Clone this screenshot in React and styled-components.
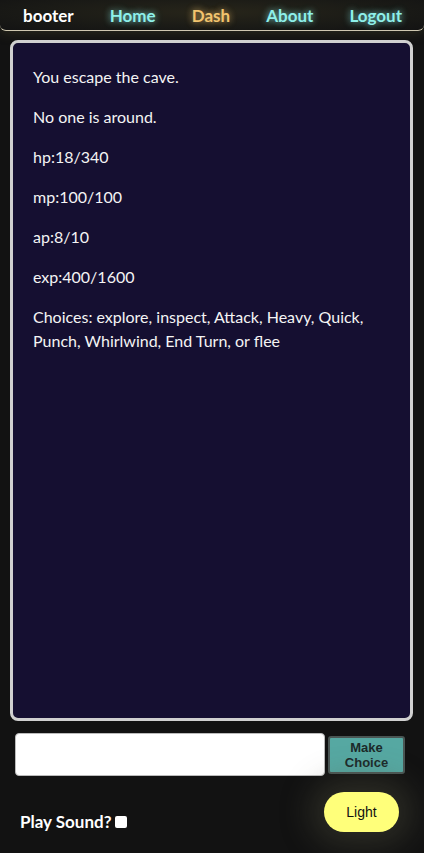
import React from "react"
import styled, { createGlobalStyle } from "styled-components"

const Global = createGlobalStyle`
  html, body {
    margin: 0;
    padding: 0;
    background-color: #121212;
    height: 100%;
  }
  #root {
    min-height: 100%;
  }
`

const Page = styled.div`
  min-height: 853px;
  display: flex;
  flex-direction: column;
  background-color: #121212;
  font-family: Lato, "Open Sans", sans-serif;
  overflow: hidden;
`

const Nav = styled.nav`
  height: 31px;
  display: flex;
  align-items: center;
  justify-content: space-between;
  padding: 0 22px 0 23px;
  border-bottom: 1px solid #cfc8b0;
  border-radius: 0 0 6px 6px;
  box-sizing: border-box;
  background: radial-gradient(ellipse at 50% 40%, #27251a 0%, #1a1a16 60%, #131313 100%);
  box-shadow: 0 2px 12px rgba(90, 85, 50, 0.35);
`

const NavLink = styled.span`
  font-weight: 700;
  font-size: 17px;
  color: ${p => p.color};
  text-shadow: ${p => p.glow ? `0 0 6px ${p.color}99, 0 0 10px ${p.color}55` : "none"};
`

const Screen = styled.div`
  margin: 9px 11px 0 10px;
  height: 681px;
  box-sizing: border-box;
  border: 3px solid #d0d0d0;
  border-radius: 8px;
  background-color: #150f31;
  padding: 6px 20px;
  color: #f4f4f4;
  font-size: 16px;
  line-height: 24px;
`

const Line = styled.p`
  margin: 16px 0;
`

const InputRow = styled.div`
  display: flex;
  align-items: center;
  margin: 12px 0 0 15px;
  gap: 3px;
`

const ChoiceInput = styled.input`
  width: 310px;
  height: 43px;
  box-sizing: border-box;
  border: 1px solid #bbb;
  border-radius: 4px;
  background: #fff;
  outline: none;
`

const ChoiceButton = styled.button`
  width: 77px;
  height: 38px;
  box-sizing: border-box;
  background-color: #56a8a2;
  border: 2px solid #4a5654;
  border-radius: 3px;
  font-family: "Liberation Sans", Arial, sans-serif;
  font-weight: 700;
  font-size: 13px;
  line-height: 15px;
  color: #1c2a2a;
  padding: 0;
`

const BottomRow = styled.div`
  display: flex;
  justify-content: space-between;
  align-items: flex-end;
  margin: 16px 25px 0 20px;
`

const SoundLabel = styled.label`
  display: flex;
  align-items: center;
  gap: 3px;
  color: #fff;
  font-weight: 700;
  font-size: 17px;
  padding-bottom: 0;
`

const Box = styled.span`
  width: 12px;
  height: 12px;
  background: #fff;
  border-radius: 2px;
  display: inline-block;
`

const LightButton = styled.button`
  width: 75px;
  height: 40px;
  border: none;
  border-radius: 20px;
  background-color: #ffff7a;
  color: #111;
  font-family: "Liberation Sans", Arial, sans-serif;
  font-size: 14px;
  box-shadow: 0 0 30px 14px rgba(90, 88, 70, 0.35);
`

const lines = [
  "You escape the cave.",
  "No one is around.",
  "hp:18/340",
  "mp:100/100",
  "ap:8/10",
  "exp:400/1600",
  "Choices: explore, inspect, Attack, Heavy, Quick, Punch, Whirlwind, End Turn, or flee",
]

export default function App() {
  return (
    <Page>
      <Global />
      <Nav>
        <NavLink color="#ffffff">booter</NavLink>
        <NavLink color="#8ef0ea" glow>Home</NavLink>
        <NavLink color="#f2c46e" glow>Dash</NavLink>
        <NavLink color="#8ef0ea" glow>About</NavLink>
        <NavLink color="#8ef0ea" glow>Logout</NavLink>
      </Nav>
      <Screen>
        {lines.map(l => <Line key={l}>{l}</Line>)}
      </Screen>
      <InputRow>
        <ChoiceInput />
        <ChoiceButton>Make<br />Choice</ChoiceButton>
      </InputRow>
      <BottomRow>
        <SoundLabel>Play Sound? <Box /></SoundLabel>
        <LightButton>Light</LightButton>
      </BottomRow>
    </Page>
  )
}
